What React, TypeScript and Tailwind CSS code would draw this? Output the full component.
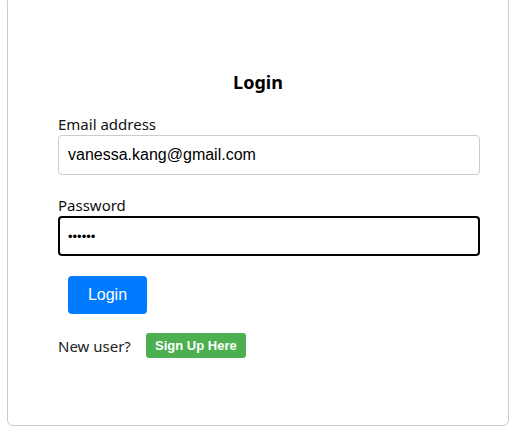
import React, { useState } from 'react';

const App: React.FC = () => {
  const [email, setEmail] = useState('vanessa.kang@gmail.com');
  const [password, setPassword] = useState('secret');

  const labelClass = "text-[15px] leading-[20px] text-[#111] font-['Noto_Sans','Open_Sans',sans-serif]";

  return (
    <div className="w-[516px] h-[447px] bg-white overflow-hidden">
      <div className="-mt-[4px] ml-[7px] w-[502px] h-[430px] border border-[#cccccc] rounded-[6px] bg-white">
        <div className="pt-[73px] flex flex-col">
          <h2 className="text-center text-[18px] leading-[24px] font-bold text-black font-['Noto_Sans','Open_Sans',sans-serif]">
            Login
          </h2>

          {/* form */}
          <div className="ml-[50px] w-[422px] mt-[20px] flex flex-col">
            <label className={labelClass}>Email address</label>
            <input
              type="email"
              value={email}
              onChange={(e) => setEmail(e.target.value)}
              className="mt-[1px] h-[40px] w-full border border-[#cccccc] rounded-[4px] px-[9px] text-[16px] text-black outline-none font-['Liberation_Sans',Arial,sans-serif]"
            />

            <label className={`mt-[20px] ${labelClass}`}>Password</label>
            <input
              type="password"
              value={password}
              onChange={(e) => setPassword(e.target.value)}
              className="mt-[1px] h-[40px] w-full border-2 border-black rounded-[4px] px-[8px] text-[13px] text-black outline-none font-['Liberation_Sans',Arial,sans-serif]"
            />

            <button
              type="button"
              className="mt-[20px] ml-[10px] w-[79px] h-[38px] bg-[#007bff] text-white text-[16px] rounded-[4px] font-['Liberation_Sans',Arial,sans-serif]"
            >
              Login
            </button>

            <div className="mt-[19px] flex items-center">
              <span className="text-[15px] leading-[20px] text-[#222] font-['Noto_Sans','Open_Sans',sans-serif]">New user?</span>
              <button
                type="button"
                className="ml-[15px] w-[100px] h-[25px] bg-[#4caf50] text-white text-[13px] font-bold rounded-[3px] font-['Liberation_Sans',Arial,sans-serif]"
              >
                Sign Up Here
              </button>
            </div>
          </div>
        </div>
      </div>
    </div>
  );
};

export default App;
